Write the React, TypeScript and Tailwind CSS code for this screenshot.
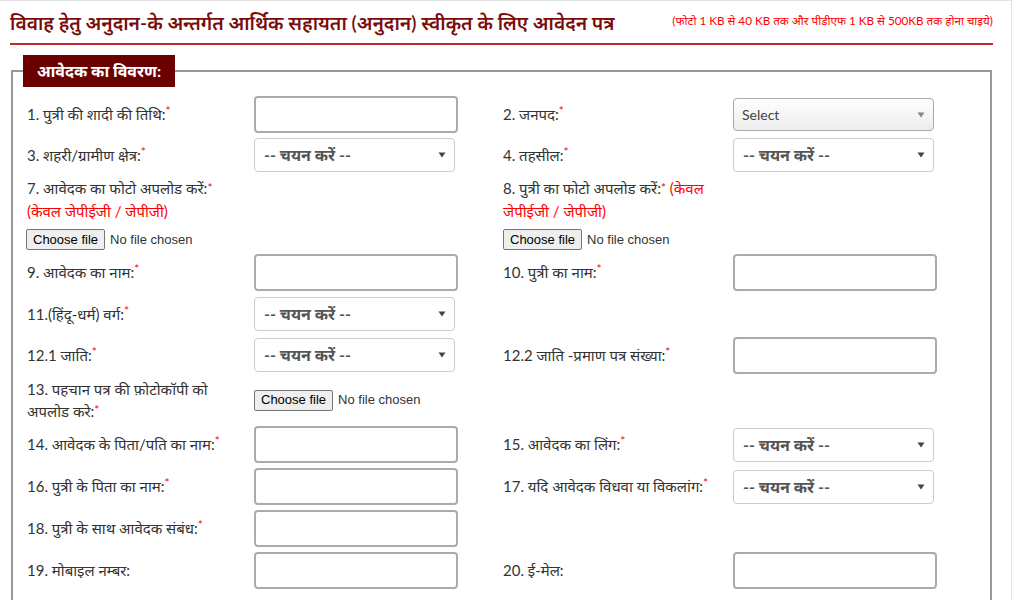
import React from "react";

const Star = () => <span className="text-[#ff0000] text-[12px] align-top relative top-[-1px]">*</span>;

const TextBox = () => (
  <div className="w-[204px] h-[37px] rounded-[4px] border-2 border-[#ababab] bg-white shrink-0" />
);

const Arrow = ({ color }: { color: string }) => (
  <svg width="8" height="6" viewBox="0 0 8 6" className="shrink-0">
    <polygon points="0.5,0.5 7.5,0.5 4,5.5" fill={color} />
  </svg>
);

const Chayan = () => (
  <div className="w-[201px] h-[34px] rounded-[4px] border border-[#cccccc] bg-white shrink-0 flex items-center justify-between pl-[9px] pr-[8px]">
    <span className="font-bold text-[16px] text-[#555555]">-- चयन करें --</span>
    <Arrow color="#444" />
  </div>
);

const Select2 = () => (
  <div className="w-[201px] h-[33px] rounded-[4px] border border-[#aaaaaa] bg-gradient-to-b from-white to-[#ececec] shrink-0 flex items-center justify-between pl-[8px] pr-[8px]">
    <span className="text-[14px] text-[#444444]">Select</span>
    <Arrow color="#888" />
  </div>
);

const FileInput = () => (
  <div className="flex items-center font-['Liberation_Sans',Arial,sans-serif] text-[13px] text-[#333]">
    <div className="h-[21px] px-[6px] flex items-center border border-[#767676] rounded-[2px] bg-[#efefef] text-black">Choose file</div>
    <span className="ml-[5px]">No file chosen</span>
  </div>
);

type HalfProps = { label?: React.ReactNode; control?: React.ReactNode; right?: boolean };

const Half = ({ label, control, right }: HalfProps) => (
  <div className={right ? "flex items-center w-[434px]" : "flex items-center w-[476px]"}>
    <div className={right ? "w-[230px] shrink-0" : "w-[227px] shrink-0"}>{label}</div>
    {control}
  </div>
);

const Row = ({ h, mb, children, items = "items-center" }: { h: string; mb: string; children: React.ReactNode; items?: string }) => (
  <div className={`flex ${items} ${h} ${mb}`}>{children}</div>
);

export default function App() {
  return (
    <div
      className="w-[1012px] h-[600px] overflow-hidden border-t border-r border-[#e3e3e3] bg-white text-[#333333] text-[15px]"
      style={{ fontFamily: "Lato, 'Noto Sans', sans-serif" }}
    >
      {/* header */}
      <div className="ml-[10px] mr-[18px] h-[44px] border-b-2 border-[#c1272d] flex items-center justify-between">
        <h1 className="text-[19.2px] font-semibold text-[#7b0c0c] leading-none pt-[1px] whitespace-nowrap">
          विवाह हेतु अनुदान-के अन्तर्गत आर्थिक सहायता (अनुदान) स्वीकृत के लिए आवेदन पत्र
        </h1>
        <span className="text-[11.7px] text-[#ff0000] pb-[3px] whitespace-nowrap">
          (फोटो 1 KB से 40 KB तक और पीडीएफ 1 KB से 500KB तक होना चाइये)
        </span>
      </div>

      {/* fieldset */}
      <div className="ml-[11px] mt-[25px] w-[981px] h-[700px] border-2 border-[#999999] pl-[14px]">
        <div className="-mt-[17px] -ml-[4px] w-[152px] h-[32px] bg-[#6b0000] text-white font-bold text-[16px] flex items-center justify-center">
          आवेदक का विवरण:
        </div>

        <div className="mt-[9px]">
          <Row h="h-[37px]" mb="mb-[5px]">
            <Half label={<>1. पुत्री की शादी की तिथि:<Star /></>} control={<TextBox />} />
            <Half right label={<>2. जनपद:<Star /></>} control={<Select2 />} />
          </Row>
          <Row h="h-[34px]" mb="mb-[5px]">
            <Half label={<>3. शहरी/ग्रामीण क्षेत्र:<Star /></>} control={<Chayan />} />
            <Half right label={<>4. तहसील:<Star /></>} control={<Chayan />} />
          </Row>
          <Row h="h-[73px]" mb="mb-[4px]" items="items-start">
            <div className="w-[476px] shrink-0 leading-[23px]">
              <div>
                7. आवेदक का फोटो अपलोड करें:<Star />
                <br />
                <span className="text-[#ff0000]">(केवल जेपीईजी / जेपीजी)</span>
              </div>
              <div className="mt-[5px] -ml-[1px]">
                <FileInput />
              </div>
            </div>
            <div className="w-[434px] shrink-0 leading-[23px]">
              <div>
                8. पुत्री का फोटो अपलोड करें:<Star /> <span className="text-[#ff0000]">(केवल</span>
                <br />
                <span className="text-[#ff0000]">जेपीईजी / जेपीजी)</span>
              </div>
              <div className="mt-[5px]">
                <FileInput />
              </div>
            </div>
          </Row>
          <Row h="h-[37px]" mb="mb-[6px]">
            <Half label={<>9. आवेदक का नाम:<Star /></>} control={<TextBox />} />
            <Half right label={<>10. पुत्री का नाम:<Star /></>} control={<TextBox />} />
          </Row>
          <Row h="h-[34px]" mb="mb-[6px]">
            <Half label={<>11.(हिंदू-धर्म) वर्ग:<Star /></>} control={<Chayan />} />
          </Row>
          <Row h="h-[36px]" mb="mb-[5px]">
            <Half label={<>12.1 जाति:<Star /></>} control={<Chayan />} />
            <Half right label={<>12.2 जाति -प्रमाण पत्र संख्या:<Star /></>} control={<TextBox />} />
          </Row>
          <Row h="h-[44px]" mb="mb-[4px]">
            <Half
              label={
                <div className="leading-[22px]">
                  13. पहचान पत्र की फ़ोटोकॉपी को
                  <br />
                  अपलोड करे:<Star />
                </div>
              }
              control={<FileInput />}
            />
          </Row>
          <Row h="h-[37px]" mb="mb-[5px]">
            <Half label={<>14. आवेदक के पिता/पति का नाम:<Star /></>} control={<TextBox />} />
            <Half right label={<>15. आवेदक का लिंग:<Star /></>} control={<Chayan />} />
          </Row>
          <Row h="h-[37px]" mb="mb-[5px]">
            <Half label={<>16. पुत्री के पिता का नाम:<Star /></>} control={<TextBox />} />
            <Half right label={<>17. यदि आवेदक विधवा या विकलांग:<Star /></>} control={<Chayan />} />
          </Row>
          <Row h="h-[37px]" mb="mb-[5px]">
            <Half label={<>18. पुत्री के साथ आवेदक संबंध:<Star /></>} control={<TextBox />} />
          </Row>
          <Row h="h-[37px]" mb="mb-[5px]">
            <Half label={<>19. मोबाइल नम्बर:</>} control={<TextBox />} />
            <Half right label={<>20. ई-मेल:</>} control={<TextBox />} />
          </Row>
          <Row h="h-[44px]" mb="mb-[5px]" items="items-start">
            <div className="w-[227px] leading-[22px] pt-[3px] whitespace-nowrap">
              21. आवेदक के बैंक खाते की जानकारी<Star />
            </div>
          </Row>
        </div>
      </div>
    </div>
  );
}
